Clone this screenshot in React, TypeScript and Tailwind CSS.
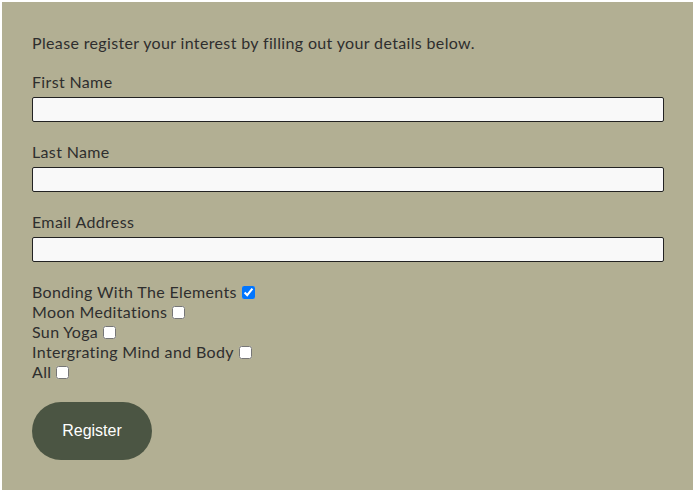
import React from 'react';

const Field: React.FC<{ label: string; id: string; type?: string }> = ({ label, id, type = 'text' }) => (
  <div className="mb-5">
    <label htmlFor={id} className="block leading-5 mb-[5px]">{label}</label>
    <input
      id={id}
      type={type}
      className="block w-full h-[25px] bg-[#f9f9f9] border border-[#222] rounded-[2px] px-1 outline-none"
    />
  </div>
);

const options = [
  { label: 'Bonding With The Elements', checked: true },
  { label: 'Moon Meditations', checked: false },
  { label: 'Sun Yoga', checked: false },
  { label: 'Intergrating Mind and Body', checked: false },
  { label: 'All', checked: false },
];

export default function App() {
  return (
    <div className="bg-white p-[2px] min-h-[490px]">
      <div
        className="bg-[#b2af93] text-[#2e2e2e] text-[16px] tracking-[0.35px] pt-[31px] pl-[30px] pr-[29px] pb-[30px]"
        style={{ fontFamily: 'Lato, "Noto Sans", sans-serif' }}
      >
        <p className="leading-5 mb-[19px]">Please register your interest by filling out your details below.</p>
        <Field label="First Name" id="first" />
        <Field label="Last Name" id="last" />
        <Field label="Email Address" id="email" type="email" />
        <div className="mb-5">
          {options.map((o) => (
            <div key={o.label} className="leading-5 h-5 flex items-center">
              <span>{o.label}</span>
              <input type="checkbox" defaultChecked={o.checked} className="ml-[5px] w-[13px] h-[13px]" />
            </div>
          ))}
        </div>
        <button
          className="w-[120px] h-[58px] rounded-full bg-[#4b5543] text-white text-[16px] tracking-normal"
          style={{ fontFamily: '"Liberation Sans", Arial, sans-serif' }}
        >
          Register
        </button>
      </div>
    </div>
  );
}
